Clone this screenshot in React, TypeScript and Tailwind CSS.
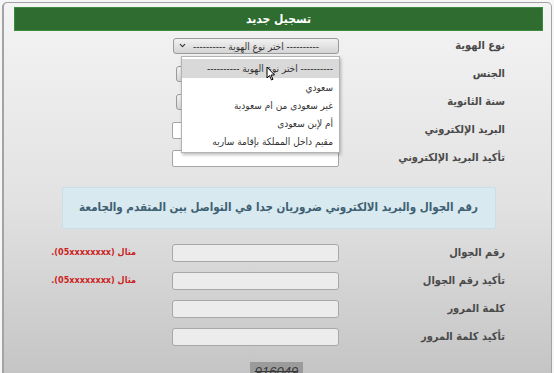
import { ChevronDown } from "lucide-react";

const AR = { fontFamily: '"DejaVu Sans Condensed", "DejaVu Sans", sans-serif' };

function Label({ text }: { text: string }) {
  return (
    <div className="w-[166px] shrink-0 text-right text-[11px] font-bold text-[#4a4a4a]">{text}</div>
  );
}

function Hint() {
  return (
    <div className="mr-[36px] text-[9px] font-bold text-[#cc1f1f] whitespace-nowrap">
      مثال (05xxxxxxxx).
    </div>
  );
}

const topRows = ["الجنس", "سنة الثانوية", "البريد الإلكتروني", "تأكيد البريد الإلكتروني"];

const options = [
  "---------- اختر نوع الهوية ----------",
  "سعودي",
  "غير سعودى من ام سعودية",
  "أم لإبن سعودى",
  "مقيم داخل المملكة بإقامة ساريه",
];

const bottomRows = [
  { label: "رقم الجوال", hint: true },
  { label: "تأكيد رقم الجوال", hint: true },
  { label: "كلمة المرور", hint: false },
  { label: "تأكيد كلمة المرور", hint: false },
];

export default function App() {
  return (
    <div className="w-[554px] h-[373px] overflow-hidden bg-[#f6f6f6] pt-[2px] pl-[2px] pr-[2px]" style={AR}>
      <div
        dir="rtl"
        className="h-[400px] border border-[#a3a3a3] border-l-2 rounded-t-[5px] bg-gradient-to-b from-[#f4f4f4] via-[#e2e2e2] to-[#c0c0c0] pt-[4px] pl-[10px] pr-[8px]"
      >
        <div className="h-[24px] bg-[#2e6c2f] border border-[#3f8a40] flex items-center justify-center text-white text-[12px] font-bold">
          تسجيل جديد
        </div>

        <div className="pr-[38px] mt-[1px]">
          {/* نوع الهوية */}
          <div className="h-[28px] flex items-center">
            <Label text="نوع الهوية" />
            <div className="relative w-[166px] h-[16px]">
              <div className="w-full h-full rounded-[3px] border border-[#9a9a9a] bg-gradient-to-b from-[#f2f2f2] to-[#d4d4d4] flex items-center justify-center text-[10px] text-[#333]">
                ---------- اختر نوع الهوية ----------
                <ChevronDown size={9} strokeWidth={3} className="absolute left-[5px] top-[3px] text-[#333]" />
              </div>
              {/* open list */}
              <div className="absolute z-10 left-[8px] top-[18px] w-[159px] h-[97px] bg-white border border-[#b3b3b3] shadow-[1px_2px_3px_rgba(0,0,0,0.25)] pt-[2px]">
                {options.map((o, i) => (
                  <div
                    key={o}
                    className={`${i === 0 ? "h-[19px] bg-[#d9d9d9]" : "h-[18px]"} flex items-center pr-[6px] text-[10px] text-[#333]`}
                  >
                    {o}
                  </div>
                ))}
                <svg className="absolute left-[84px] top-[9px]" width="10" height="15" viewBox="0 0 10 15">
                  <path d="M1 1 L1 12 L3.5 9.5 L5.5 14 L7 13.3 L5 9 L8.5 9 Z" fill="#fff" stroke="#000" strokeWidth="1" strokeLinejoin="round" />
                </svg>
              </div>
            </div>
          </div>

          {topRows.map((t, i) => (
            <div key={t} className="h-[28px] flex items-center">
              <Label text={t} />
              {i < 2 ? (
                <div className="w-[163px] h-[16px] rounded-[3px] border border-[#9a9a9a] bg-gradient-to-b from-[#f2f2f2] to-[#d6d6d6]" />
              ) : (
                <div className="w-[167px] h-[17px] rounded-[2px] border border-[#a5a5a5] bg-white" />
              )}
            </div>
          ))}
        </div>

        <div className="mx-auto mt-[15px] w-[434px] h-[42px] bg-[#d8e9f0] border border-[#c9dee7] rounded-[2px] flex items-center justify-center whitespace-nowrap text-[11.5px] font-bold text-[#3e6072]">
          رقم الجوال والبريد الالكتروني ضروريان جدا في التواصل بين المتقدم والجامعة
        </div>

        <div className="pr-[38px] mt-[10px]">
          {bottomRows.map((r) => (
            <div key={r.label} className="h-[28px] flex items-center">
              <Label text={r.label} />
              <div className="w-[167px] h-[18px] rounded-[3px] border border-[#a8a8a8] bg-[#ececec]" />
              {r.hint && <Hint />}
            </div>
          ))}
        </div>

        <div className="flex mt-[11px]">
          <div
            className="mr-[240px] w-[53px] h-[20px] bg-[#9b9b9b] flex items-center justify-center text-[13px] italic text-[#3a3a3a] line-through"
            style={{ fontFamily: '"Liberation Sans", sans-serif' }}
          >
            916049
          </div>
        </div>
      </div>
    </div>
  );
}
